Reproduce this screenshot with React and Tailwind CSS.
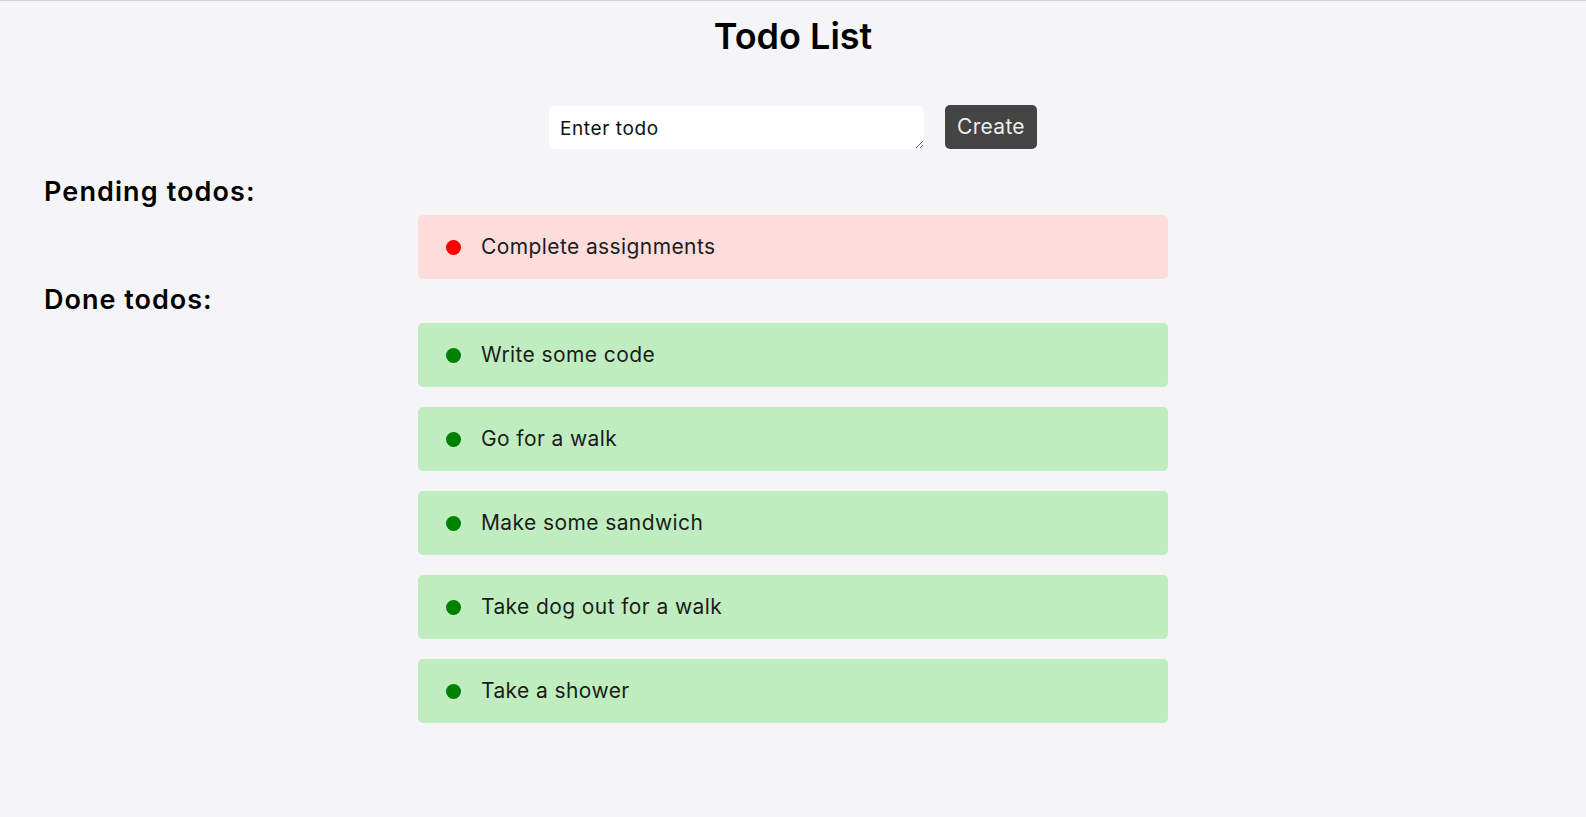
import React, { useState } from 'react';

const initialTodos = [
  { id: 1, title: 'Complete assignments', done: false },
  { id: 2, title: 'Write some code', done: true },
  { id: 3, title: 'Go for a walk', done: true },
  { id: 4, title: 'Make some sandwich', done: true },
  { id: 5, title: 'Take dog out for a walk', done: true },
  { id: 6, title: 'Take a shower', done: true },
];

const TodoItem = ({ todo }) => (
  <div
    className={`mx-auto flex h-[64px] w-[750px] items-center gap-[20px] rounded-[5px] pl-[28px] ${
      todo.done ? 'bg-[#c0edc0]' : 'bg-[#fddcdc]'
    }`}
  >
    <span className={`h-[15px] w-[15px] rounded-full ${todo.done ? 'bg-[#008000]' : 'bg-[#ff0000]'}`} />
    <span className="text-[21px] tracking-[0.4px] text-[#1c1c1c]">{todo.title}</span>
  </div>
);

const App = () => {
  const [todos, setTodos] = useState(initialTodos);
  const [texto, setTexto] = useState('');

  const handleCreate = (e) => {
    e.preventDefault();
    const title = texto.trim();
    if (!title) return;
    setTodos([{ id: Date.now(), title, done: false }, ...todos]);
    setTexto('');
  };

  const pendentes = todos.filter((t) => !t.done);
  const feitos = todos.filter((t) => t.done);

  return (
    <div className="min-h-screen border-t border-[#cfcfd2] bg-[#f5f5f7] font-['Inter',sans-serif] text-black">
      <h1 className="pt-[13px] text-center text-[36px] font-semibold leading-[44px]">Todo List</h1>

      <form onSubmit={handleCreate} className="mt-[47px] flex items-center justify-center gap-[21px]">
        <textarea
          value={texto}
          onChange={(e) => setTexto(e.target.value)}
          placeholder="Enter todo"
          className="h-[43px] w-[375px] rounded-[5px] bg-white px-[11px] pt-[10px] pb-[6px] text-[19px] leading-[26px] tracking-[0.6px] text-[#111] outline-none placeholder:text-[#111]"
        />
        <button
          type="submit"
          className="h-[44px] w-[92px] rounded-[5px] bg-[#444444] text-[21px] tracking-[0.3px] text-[#ededed]"
        >
          Create
        </button>
      </form>

      <h2 className="mt-[27px] pl-[44px] text-[27px] font-semibold leading-[32px] tracking-[1.1px]">Pending todos:</h2>
      <div className="mt-[7px] flex flex-col gap-[20px]">
        {pendentes.map((t) => (
          <TodoItem key={t.id} todo={t} />
        ))}
      </div>

      <h2 className="mt-[5px] pl-[44px] text-[27px] font-semibold leading-[32px] tracking-[1px]">Done todos:</h2>
      <div className="mt-[7px] flex flex-col gap-[20px] pb-[90px]">
        {feitos.map((t) => (
          <TodoItem key={t.id} todo={t} />
        ))}
      </div>
    </div>
  );
};

export default App;
